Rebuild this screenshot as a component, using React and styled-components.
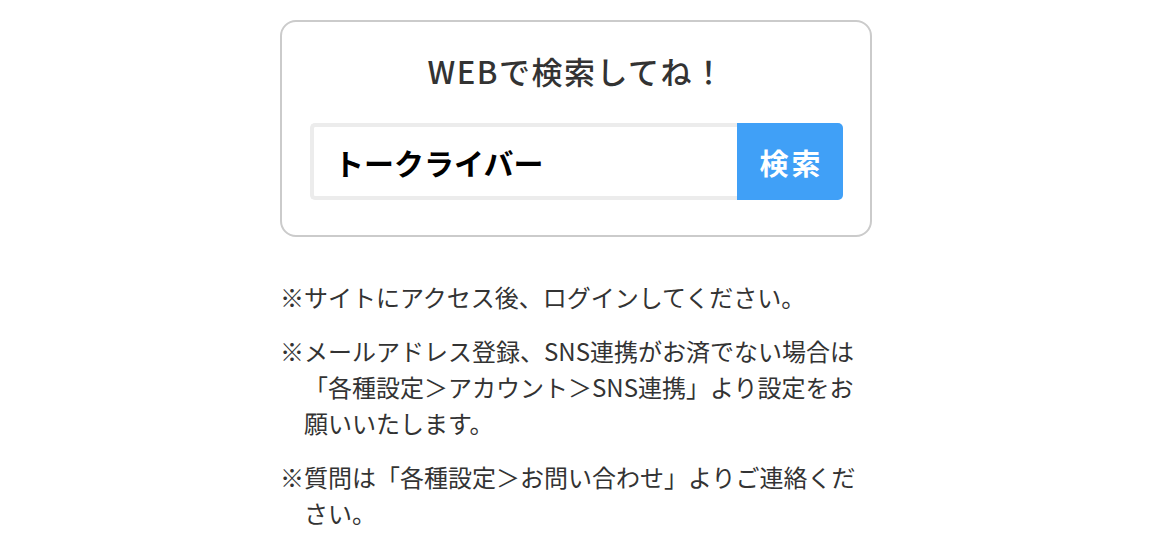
import React from 'react';
import styled, {createGlobalStyle} from 'styled-components';

const GlobalStyle = createGlobalStyle`
    body {
        margin: 0;
        background: #fff;
        font-family: "Noto Sans CJK JP", "Noto Sans", sans-serif;
        color: #333;
    }
`;

const notes = [
    "※サイトにアクセス後、ログインしてください。",
    "※メールアドレス登録、SNS連携がお済でない場合は「各種設定＞アカウント＞SNS連携」より設定をお願いいたします。",
    "※質問は「各種設定＞お問い合わせ」よりご連絡ください。",
];

const App = () => {
    return(
        <Page>
            <GlobalStyle />
            <SearchCard>
                <Title>WEBで検索してね！</Title>
                <SearchRow>
                    <SearchInput defaultValue="トークライバー" />
                    <SearchButton>検索</SearchButton>
                </SearchRow>
            </SearchCard>

            <NoteList>
                {notes.map((text, i) => (
                    <Note key={i}>{text}</Note>
                ))}
            </NoteList>
        </Page>
    );
};

const Page = styled.div`
    width: 592px;
    margin: 0 auto;
    padding-top: 20px;
`;

const SearchCard = styled.div`
    box-sizing: border-box;
    width: 100%;
    height: 217px;
    padding: 31px 27px 0 28px;
    border: 2px solid #cbcbcb;
    border-radius: 16px;
    display: flex;
    flex-direction: column;
    align-items: center;
`;

const Title = styled.h2`
    margin: 0;
    font-size: 31px;
    font-weight: 500;
    line-height: 36px;
    letter-spacing: 1.5px;
    color: #333;
`;

const SearchRow = styled.div`
    display: flex;
    width: 100%;
    height: 77px;
    margin-top: 34px;
`;

const SearchInput = styled.input`
    box-sizing: border-box;
    flex: 1;
    min-width: 0;
    height: 100%;
    padding: 0 20px;
    border: 4px solid #ececec;
    border-right: none;
    border-radius: 5px 0 0 5px;
    outline: none;
    font-family: "Noto Sans CJK JP", sans-serif;
    font-size: 30px;
    font-weight: 700;
    color: #000;
`;

const SearchButton = styled.button`
    width: 106px;
    height: 100%;
    border: none;
    border-radius: 0 5px 5px 0;
    background-color: #40a0f7;
    color: #fff;
    font-family: "Noto Sans CJK JP", sans-serif;
    font-size: 29px;
    font-weight: 700;
    letter-spacing: 3px;
    padding: 0 0 0 3px;
`;

const NoteList = styled.div`
    margin-top: 42px;
    display: flex;
    flex-direction: column;
    gap: 18px;
`;

const Note = styled.p`
    margin: 0;
    padding-left: 24px;
    text-indent: -24px;
    font-size: 24px;
    line-height: 36px;
    color: #333;
`;

export default App;
